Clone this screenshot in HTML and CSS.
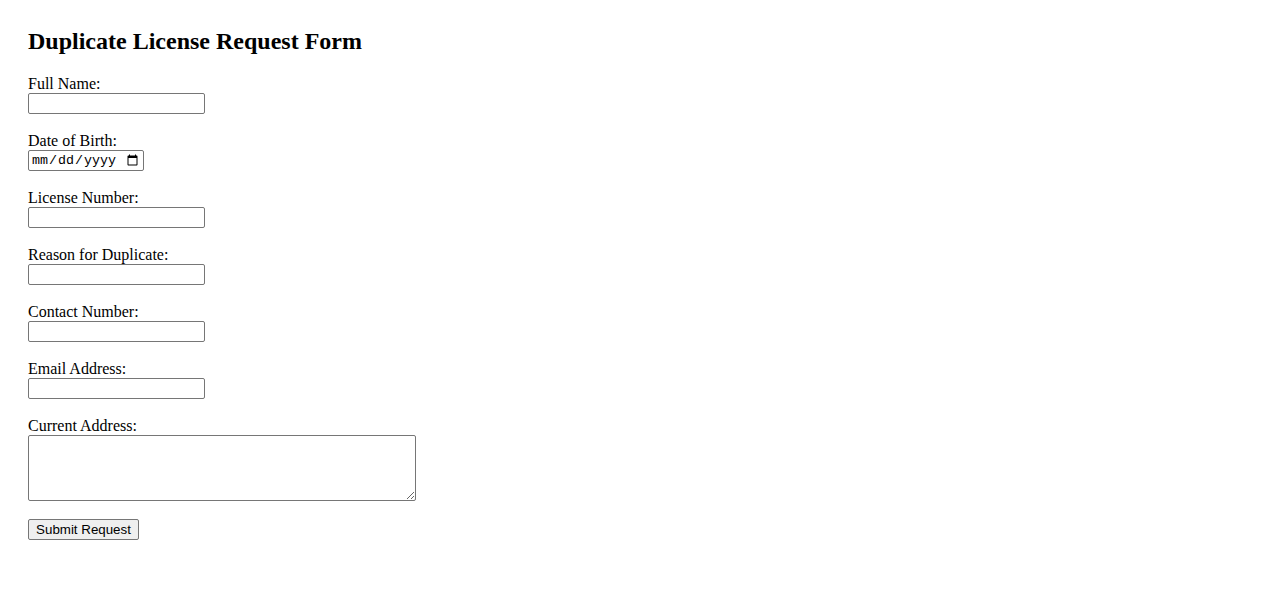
FILE: index.html
```html
<!DOCTYPE html>
<html lang="en">
<head>
<meta charset="utf-8">
<title>Duplicate License Request Form</title>
<link rel="stylesheet" href="styles.css">
</head>
<body>
<h2 class="title">Duplicate License Request Form</h2>
<form class="form">
  <div class="field">
    <label class="label" for="name">Full Name:</label>
    <input class="text" type="text" id="name">
  </div>
  <div class="field">
    <label class="label" for="dob">Date of Birth:</label>
    <input class="date" type="date" id="dob">
  </div>
  <div class="field">
    <label class="label" for="lic">License Number:</label>
    <input class="text" type="text" id="lic">
  </div>
  <div class="field">
    <label class="label" for="reason">Reason for Duplicate:</label>
    <input class="text" type="text" id="reason">
  </div>
  <div class="field">
    <label class="label" for="phone">Contact Number:</label>
    <input class="text" type="tel" id="phone">
  </div>
  <div class="field">
    <label class="label" for="email">Email Address:</label>
    <input class="text" type="email" id="email">
  </div>
  <div class="field">
    <label class="label" for="addr">Current Address:</label>
    <textarea class="area" id="addr"></textarea>
  </div>
  <button class="submit" type="submit">Submit Request</button>
</form>
</body>
</html>
```
FILE: styles.css
```css
html, body {
  background: #ffffff;
}
body {
  margin: 0;
  padding: 28px;
  font-family: "Liberation Serif", "Times New Roman", serif;
  font-size: 16px;
  color: #000;
}
.title {
  margin: 0 0 20px 0;
  font-size: 24px;
  font-weight: bold;
  line-height: 27px;
}
.form {
  display: flex;
  flex-direction: column;
  align-items: flex-start;
}
.field {
  display: flex;
  flex-direction: column;
  align-items: flex-start;
  margin-bottom: 18px;
}
.label {
  display: block;
  line-height: 18px;
  height: 18px;
}
.text, .date, .area, .submit {
  box-sizing: border-box;
  margin: 0;
  border: 1px solid #767676;
  border-radius: 2px;
  background: #fff;
}
.text {
  width: 177px;
  height: 21px;
  padding: 1px 2px;
  font-family: "Liberation Sans", Arial, sans-serif;
  font-size: 13.333px;
}
.date {
  width: 116px;
  height: 21px;
  padding: 1px 2px;
  font-family: "Liberation Mono", "DejaVu Sans Mono", monospace;
  font-size: 13.333px;
}
.area {
  display: block;
  width: 388px;
  height: 66px;
  padding: 2px;
  resize: both;
  font-family: "Liberation Mono", monospace;
  font-size: 13.333px;
}
.submit {
  height: 21px;
  width: 111px;
  padding: 1px 6px;
  background: #efefef;
  color: #000;
  font-family: "Liberation Sans", Arial, sans-serif;
  font-size: 13.333px;
  line-height: 15px;
}
```
